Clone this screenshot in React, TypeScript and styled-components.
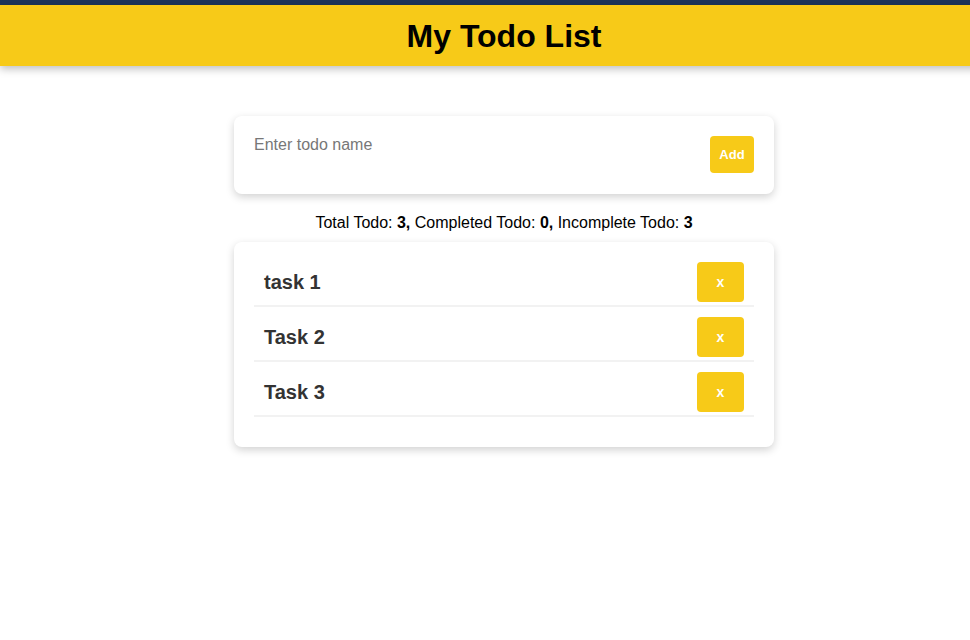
import React from "react";
import styled, { createGlobalStyle } from "styled-components";

const Global = createGlobalStyle`
  html { overflow: hidden; }
  html, body { margin: 0; padding: 0; background: #fff; }
  body { font-family: "Liberation Sans", Arial, sans-serif; min-height: 640px; }
  #root { width: 1008px; }
`;

const TopStripe = styled.div`
  height: 5px;
  background: #1d355a;
`;

const Header = styled.header`
  height: 61px;
  background: #f7ca18;
  display: flex;
  align-items: center;
  justify-content: center;
  box-shadow: 0 3px 8px rgba(0, 0, 0, 0.25);
`;

const Title = styled.h1`
  margin: 0;
  font-size: 32px;
  font-weight: 700;
  color: #000;
  padding-top: 2px;
`;

const Main = styled.main`
  width: 540px;
  margin: 50px auto 0;
  display: flex;
  flex-direction: column;
`;

const Card = styled.div`
  background: #fff;
  border-radius: 8px;
  box-shadow: 0 3px 8px rgba(0, 0, 0, 0.18);
  padding: 20px;
`;

const Form = styled(Card)`
  display: flex;
  align-items: flex-start;
  gap: 10px;
`;

const Input = styled.textarea`
  flex: 1;
  height: 38px;
  border: none;
  outline: none;
  resize: none;
  padding: 0;
  font-family: "Liberation Sans", Arial, sans-serif;
  font-size: 16px;
  line-height: 18px;
  color: #333;
  &::placeholder { color: #777; }
`;

const YellowButton = styled.button<{ $w: number; $h: number; $size: number }>`
  width: ${(p) => p.$w}px;
  height: ${(p) => p.$h}px;
  background: #f7ca18;
  color: #fff;
  border: none;
  border-radius: 4px;
  font-family: "Liberation Sans", Arial, sans-serif;
  font-weight: 700;
  font-size: ${(p) => p.$size}px;
  padding: 0;
  flex-shrink: 0;
`;

const Stats = styled.p`
  margin: 20px 0 10px;
  text-align: center;
  font-size: 16px;
  line-height: 18px;
  color: #000;
  b { font-weight: 700; }
`;

const List = styled(Card)``;

const Row = styled.div`
  display: flex;
  align-items: flex-start;
  justify-content: space-between;
  padding: 0 10px 3px;
  border-bottom: 2px solid #f2f2f2;
  margin-bottom: 10px;
`;

const TaskName = styled.span`
  font-size: 20px;
  font-weight: 700;
  color: #333;
  line-height: 40px;
`;

const todos = ["task 1", "Task 2", "Task 3"];

export default function App() {
  return (
    <>
      <Global />
      <TopStripe />
      <Header>
        <Title>My Todo List</Title>
      </Header>
      <Main>
        <Form>
          <Input placeholder="Enter todo name" />
          <YellowButton $w={44} $h={37} $size={13}>Add</YellowButton>
        </Form>
        <Stats>
          Total Todo: <b>3,</b> Completed Todo: <b>0,</b> Incomplete Todo: <b>3</b>
        </Stats>
        <List>
          {todos.map((t) => (
            <Row key={t}>
              <TaskName>{t}</TaskName>
              <YellowButton $w={47} $h={40} $size={14}>x</YellowButton>
            </Row>
          ))}
        </List>
      </Main>
    </>
  );
}
